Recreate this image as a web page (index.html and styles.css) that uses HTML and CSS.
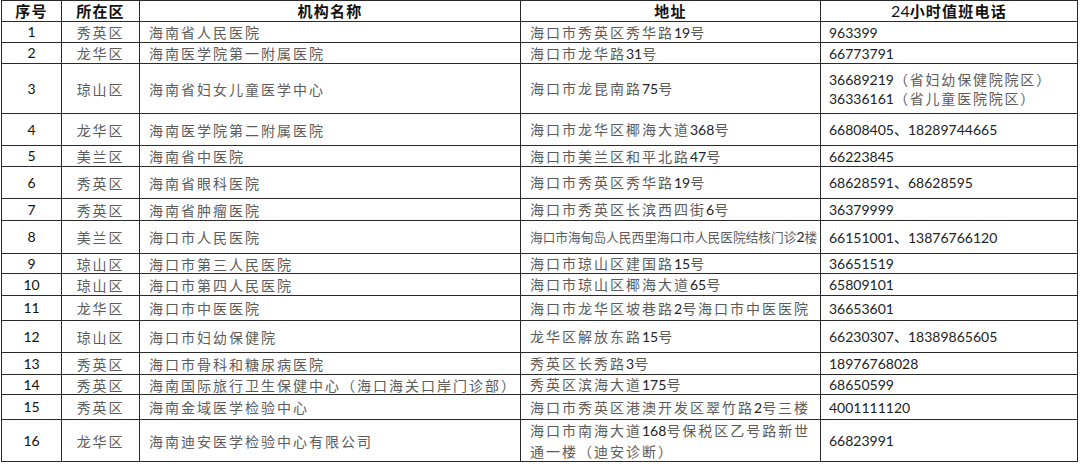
FILE: index.html
```html
<!DOCTYPE html>
<html lang="zh-CN">
<head>
<meta charset="utf-8">
<title>24小时值班电话</title>
<link rel="stylesheet" href="styles.css">
</head>
<body>
<table class="tbl">
  <colgroup>
    <col class="c-no"><col class="c-dist"><col class="c-name"><col class="c-addr"><col class="c-tel">
  </colgroup>
  <thead>
    <tr class="h21">
      <th>序号</th><th>所在区</th><th>机构名称</th><th>地址</th><th><span class="hn">24</span>小时值班电话</th>
    </tr>
  </thead>
  <tbody>
    <tr class="h21">
      <td class="no">1</td><td class="dist">秀英区</td><td class="txt">海南省人民医院</td>
      <td class="txt">海口市秀英区秀华路<span class="n">19</span>号</td><td class="tel">963399</td>
    </tr>
    <tr class="h21">
      <td class="no">2</td><td class="dist">龙华区</td><td class="txt">海南医学院第一附属医院</td>
      <td class="txt">海口市龙华路<span class="n">31</span>号</td><td class="tel">66773791</td>
    </tr>
    <tr class="h50">
      <td class="no">3</td><td class="dist">琼山区</td><td class="txt">海南省妇女儿童医学中心</td>
      <td class="txt">海口市龙昆南路<span class="n">75</span>号</td>
      <td class="tel">36689219<span class="cj">（省妇幼保健院院区）</span><br>36336161<span class="cj">（省儿童医院院区）</span></td>
    </tr>
    <tr class="h32">
      <td class="no">4</td><td class="dist">龙华区</td><td class="txt">海南医学院第二附属医院</td>
      <td class="txt">海口市龙华区椰海大道<span class="n">368</span>号</td><td class="tel">66808405、18289744665</td>
    </tr>
    <tr class="h21">
      <td class="no">5</td><td class="dist">美兰区</td><td class="txt">海南省中医院</td>
      <td class="txt">海口市美兰区和平北路<span class="n">47</span>号</td><td class="tel">66223845</td>
    </tr>
    <tr class="h32">
      <td class="no">6</td><td class="dist">秀英区</td><td class="txt">海南省眼科医院</td>
      <td class="txt">海口市秀英区秀华路<span class="n">19</span>号</td><td class="tel">68628591、68628595</td>
    </tr>
    <tr class="h22">
      <td class="no">7</td><td class="dist">秀英区</td><td class="txt">海南省肿瘤医院</td>
      <td class="txt">海口市秀英区长滨西四街<span class="n">6</span>号</td><td class="tel">36379999</td>
    </tr>
    <tr class="h33">
      <td class="no">8</td><td class="dist">美兰区</td><td class="txt">海口市人民医院</td>
      <td class="txt tight">海口市海甸岛人民西里海口市人民医院结核门诊<span class="n">2</span>楼</td><td class="tel">66151001、13876766120</td>
    </tr>
    <tr class="h20">
      <td class="no">9</td><td class="dist">琼山区</td><td class="txt">海口市第三人民医院</td>
      <td class="txt">海口市琼山区建国路<span class="n">15</span>号</td><td class="tel">36651519</td>
    </tr>
    <tr class="h22">
      <td class="no">10</td><td class="dist">琼山区</td><td class="txt">海口市第四人民医院</td>
      <td class="txt">海口市琼山区椰海大道<span class="n">65</span>号</td><td class="tel">65809101</td>
    </tr>
    <tr class="h25">
      <td class="no">11</td><td class="dist">龙华区</td><td class="txt">海口市中医医院</td>
      <td class="txt">海口市龙华区坡巷路<span class="n">2</span>号海口市中医医院</td><td class="tel">36653601</td>
    </tr>
    <tr class="h32">
      <td class="no">12</td><td class="dist">琼山区</td><td class="txt">海口市妇幼保健院</td>
      <td class="txt">龙华区解放东路<span class="n">15</span>号</td><td class="tel">66230307、18389865605</td>
    </tr>
    <tr class="h22">
      <td class="no">13</td><td class="dist">秀英区</td><td class="txt">海口市骨科和糖尿病医院</td>
      <td class="txt">秀英区长秀路<span class="n">3</span>号</td><td class="tel">18976768028</td>
    </tr>
    <tr class="h20">
      <td class="no">14</td><td class="dist">秀英区</td><td class="txt">海南国际旅行卫生保健中心（海口海关口岸门诊部）</td>
      <td class="txt">秀英区滨海大道<span class="n">175</span>号</td><td class="tel">68650599</td>
    </tr>
    <tr class="h25">
      <td class="no">15</td><td class="dist">秀英区</td><td class="txt">海南金域医学检验中心</td>
      <td class="txt">海口市秀英区港澳开发区翠竹路<span class="n">2</span>号三楼</td><td class="tel">4001111120</td>
    </tr>
    <tr class="h42">
      <td class="no">16</td><td class="dist">龙华区</td><td class="txt">海南迪安医学检验中心有限公司</td>
      <td class="txt ml">海口市南海大道<span class="n">168</span>号保税区乙号路新世<br>通一楼（迪安诊断）</td><td class="tel">66823991</td>
    </tr>
  </tbody>
</table>
</body>
</html>
```

FILE: styles.css
```css
html, body {
  margin: 0;
  padding: 0;
  background: #ffffff;
}

body {
  padding-left: 1px;
  font-family: "Noto Sans CJK SC", sans-serif;
}

.tbl {
  border-collapse: collapse;
  table-layout: fixed;
  width: 1076px;
  border: 1px solid #222;
}

.c-no { width: 60px; }
.c-dist { width: 78px; }
.c-name { width: 381px; }
.c-addr { width: 300px; }
.c-tel { width: 257px; }

.tbl th,
.tbl td {
  border: 1px solid #2a2a2a;
  padding: 0;
  vertical-align: middle;
  overflow: hidden;
}

.tbl th {
  font-family: "Noto Sans CJK SC", sans-serif;
  font-weight: 700;
  font-size: 15px;
  letter-spacing: 1.2px;
  line-height: 18px;
  color: #111;
  text-align: center;
}

.hn {
  font-family: Lato, "Noto Sans CJK SC", sans-serif;
  font-weight: 400;
  font-size: 16px;
  letter-spacing: 0;
}

.h20 { height: 20px; }
.h21 { height: 21px; }
.h22 { height: 22px; }
.h25 { height: 25px; }
.h32 { height: 32px; }
.h33 { height: 33px; }
.h42 { height: 42px; }
.h50 { height: 50px; }

.tbl .no {
  font-family: Lato, sans-serif;
  font-size: 14px;
  font-weight: 400;
  color: #111;
  text-align: center;
  line-height: 18px;
}

.tbl .dist {
  font-size: 14px;
  letter-spacing: 1.8px;
  color: #5c5c5c;
  text-align: center;
  line-height: 18px;
}

.tbl .txt {
  font-size: 14px;
  letter-spacing: 2px;
  color: #5c5c5c;
  line-height: 18px;
  padding-left: 9px;
  white-space: nowrap;
}

.tbl .ml {
  line-height: 20px;
}

.tbl .tight {
  font-size: 12.7px;
  letter-spacing: 0;
  padding-left: 9px;
}

.n {
  font-family: Lato, sans-serif;
  color: #222;
  letter-spacing: 0;
  font-size: 14px;
}

.tbl .tel {
  font-family: Lato, "Noto Sans CJK SC", sans-serif;
  font-size: 14px;
  color: #222;
  line-height: 19px;
  padding-left: 8px;
  white-space: nowrap;
}

.cj {
  font-family: "Noto Sans CJK SC", sans-serif;
  color: #5c5c5c;
  letter-spacing: 1.8px;
}
```
